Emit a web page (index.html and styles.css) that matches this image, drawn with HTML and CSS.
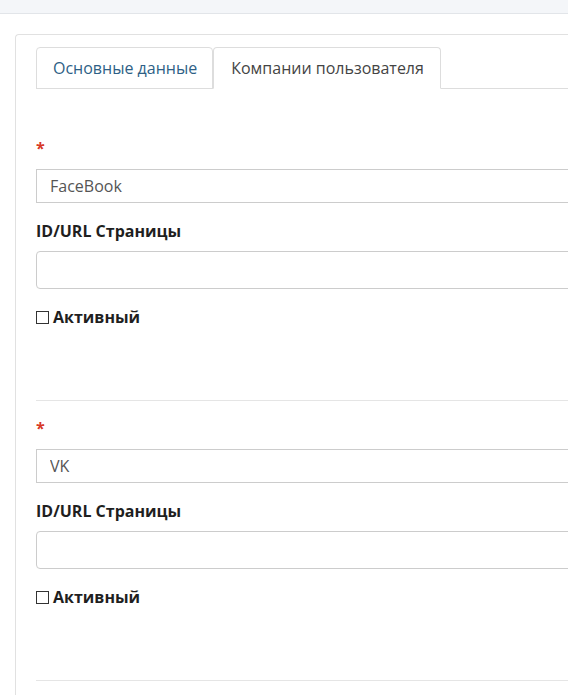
FILE: index.html
```html
<!DOCTYPE html>
<html lang="ru">
<head>
<meta charset="utf-8">
<title>Компании пользователя</title>
<link rel="stylesheet" href="styles.css">
</head>
<body>
<div class="topbar"></div>
<div class="content">
  <div class="card">
    <ul class="tabs">
      <li class="tab"><a href="#">Основные данные</a></li>
      <li class="tab active"><a href="#">Компании пользователя</a></li>
    </ul>
    <div class="pane">
      <div class="company first">
        <label class="lbl req">*</label>
        <input class="field name" type="text" value="FaceBook">
        <label class="lbl">ID/URL Страницы</label>
        <input class="field url" type="text" value="">
        <label class="check"><span class="box"></span>Активный</label>
      </div>
      <hr class="sep">
      <div class="company">
        <label class="lbl req">*</label>
        <input class="field name" type="text" value="VK">
        <label class="lbl">ID/URL Страницы</label>
        <input class="field url" type="text" value="">
        <label class="check"><span class="box"></span>Активный</label>
      </div>
      <hr class="sep">
    </div>
  </div>
</div>
</body>
</html>
```
FILE: styles.css
```css
html, body {
  margin: 0;
  padding: 0;
  background: #ffffff;
  overflow: hidden;
}
body {
  font-family: "Open Sans", "Noto Sans", sans-serif;
  font-size: 16px;
  line-height: 21px;
  color: #333;
}
.topbar {
  height: 13px;
  background: #f4f6f9;
  border-bottom: 1px solid #e2e5e9;
}
.content {
  padding: 20px 0 0 15px;
  width: 900px;
}
.card {
  border: 1px solid #e1e1e1;
  border-right: none;
  border-bottom: none;
  border-top-left-radius: 4px;
  padding: 12px 0 0 20px;
  min-height: 700px;
}
.tabs {
  list-style: none;
  margin: 0;
  padding: 0;
  display: flex;
  border-bottom: 1px solid #dddddd;
}
.tab {
  margin-bottom: -1px;
}
.tab a {
  display: block;
  height: 40px;
  line-height: 40px;
  padding: 0 15px 0 16px;
  border: 1px solid #dddddd;
  border-radius: 4px 4px 0 0;
  color: #2e5f86;
  text-decoration: none;
}
.tab.active a {
  color: #444;
  border-bottom-color: #ffffff;
  padding: 0 16px 0 17px;
}
.pane {
  padding-top: 49px;
}
.company {
  display: flex;
  flex-direction: column;
  align-items: flex-start;
}
.lbl {
  display: block;
  font-weight: 700;
  color: #1f1f1f;
  margin-bottom: 9px;
}
.lbl.req {
  color: #d73925;
  margin-bottom: 10px;
}
.field {
  box-sizing: border-box;
  width: 100%;
  font-family: "Open Sans", "Noto Sans", sans-serif;
  font-size: 16px;
  color: #555;
  border: 1px solid #cccccc;
  background: #fff;
  padding: 0 13px;
  margin: 0 0 18px 0;
  outline: none;
}
.field.name {
  height: 34px;
  border-radius: 0;
}
.field.url {
  height: 38px;
  border-radius: 4px;
  margin-bottom: 18px;
}
.check {
  display: flex;
  align-items: center;
  font-weight: 700;
  color: #1f1f1f;
}
.box {
  box-sizing: border-box;
  width: 13px;
  height: 13px;
  border: 1px solid #333;
  background: #fff;
  margin-right: 4px;
}
.sep {
  border: none;
  border-top: 1px solid #e5e5e5;
  margin: 72px 0 17px 0;
}
```
